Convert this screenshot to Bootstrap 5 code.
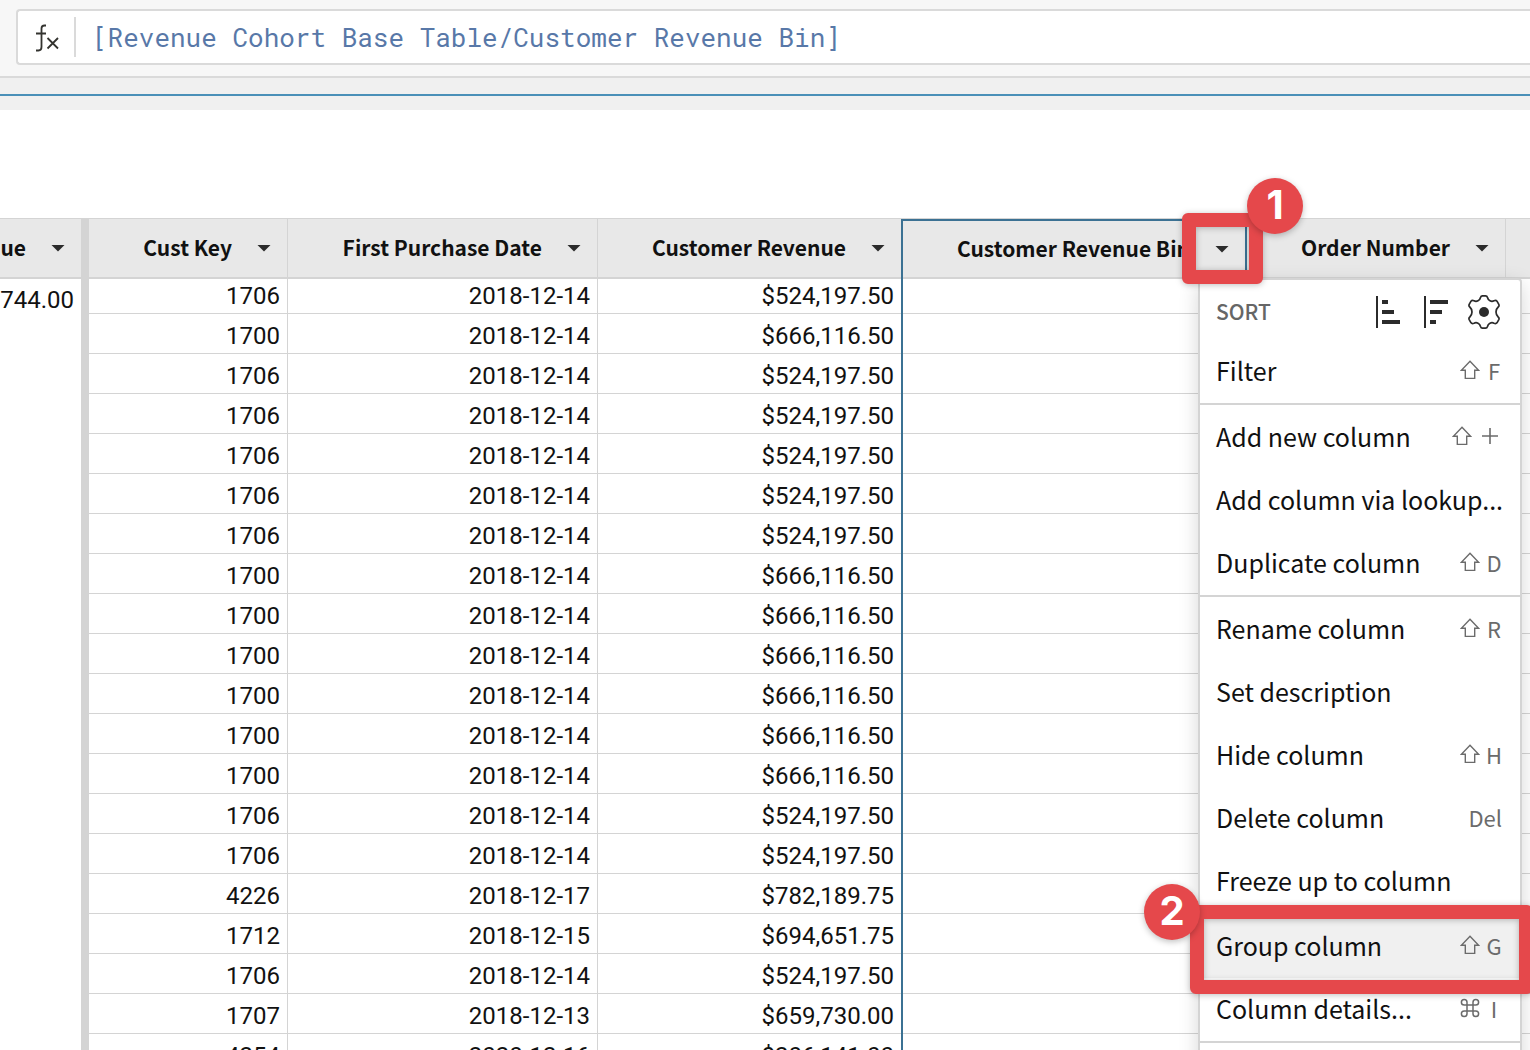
<!DOCTYPE html>
<html lang="en">
<head>
<meta charset="utf-8">
<meta name="viewport" content="width=device-width, initial-scale=1">
<title>Revenue Cohort Base Table</title>
<link href="https://cdn.jsdelivr.net/npm/bootstrap@5.3.0/dist/css/bootstrap.min.css" rel="stylesheet">
<style>
  :root { --line: #d4d4d4; --accent: #3b7193; --callout: #e5484b; }
  body { font-family: "Noto Sans CJK SC", "Noto Sans", sans-serif; color: #111; }

  /* formula bar */
  .formula-area { background: #f7f7f7; border-bottom: 2px solid #dadada; padding: 9px 0 11px 16px; }
  .formula-box { background: #fff; border: 2px solid #dadada; border-right: 0; border-radius: 4px 0 0 4px; height: 56px; padding-left: 16px; }
  .formula-icon { width: 42px; height: 40px; border-right: 2px solid #dadada; }
  .formula-input { font-family: "Roboto Mono", "Liberation Mono", monospace; font-size: 26px; color: #5878a8; padding: 0 16px; height: 48px; }
  .formula-input:focus { color: #5878a8; box-shadow: none; }
  .strip { background: #f0f0f0; height: 32px; padding-top: 16px; }
  .strip-line { height: 2px; background: #4a90b8; }

  /* data grid */
  .grid-wrap { margin-top: 108px; border-top: 1px solid var(--line); }
  .grid { table-layout: fixed; border-collapse: separate; border-spacing: 0; width: 100%; }
  .grid th { height: 60px; padding: 0 16px 0 0; background: #e8e8e8; border-right: 1px solid var(--line); border-bottom: 2px solid var(--line); font-size: 21px; line-height: 32px; font-weight: 700; position: relative; white-space: nowrap; }
  .head-text { padding-bottom: 2px; }
  .grid td { height: 40px; padding: 4px 7px 0 0; border-right: 1px solid var(--line); border-bottom: 1px solid var(--line); font-family: Roboto, sans-serif; font-size: 24px; line-height: 32px; text-align: right; vertical-align: middle; }
  .grid tbody tr:first-child td { height: 35px; padding-top: 0; }
  .grid .frozen { border-right: 8px solid var(--line); }
  .grid tbody tr:first-child td.frozen { vertical-align: top; padding-top: 5px; border-bottom: 0; }
  .grid .before-active { border-right: 0; }
  .grid .active-col { border-left: 2px solid var(--accent); border-right: 2px solid var(--accent); position: relative; }
  .grid .active-col::before { content: ""; position: absolute; top: 0; bottom: -2px; left: -2px; width: 2px; background: var(--accent); }
  .grid th.active-col { border-top: 2px solid var(--accent); height: 60px; }
  .grid th.active-col .head-text { padding-bottom: 3px; }
  .grid .edge { border-right: 0; }
  .caret { width: 14px; height: 7px; border: 0; padding: 0; background: #2b2b2b; clip-path: polygon(0 0, 100% 0, 50% 100%); margin-left: 25px; flex: none; }

  /* column menu */
  .col-menu { display: block; position: absolute; top: 57px; right: -277px; width: 324px; padding: 0; border: 2px solid var(--line); border-radius: 4px; box-shadow: 0 6px 20px rgba(0,0,0,.16); font-weight: 400; z-index: 5; background: #fff; }
  .sort-row { height: 60px; padding: 4px 18px 0 16px; }
  .sort-label { font-size: 21px; font-weight: 500; color: #666; padding-bottom: 2px; }
  .icon-btn { border: 0; background: none; padding: 0; line-height: 0; }
  .menu-row { height: 63px; padding: 0 18px 4px 16px; font-size: 25px; line-height: 36px; color: #111; position: relative; }
  .menu-row.current { height: 65px; padding-bottom: 2px; background: #f0f0f0; }
  .keys { font-size: 22px; color: #6b6b6b; gap: 6px; }
  .key { width: 16px; text-align: center; display: inline-flex; justify-content: center; }
  .key-wide { width: 24px; }
  .rule { height: 2px; background: var(--line); }
  .sec-pad { padding-top: 1px; }

  /* tutorial callouts */
  .ring { position: absolute; border: 14px solid var(--callout); border-radius: 6px; pointer-events: none; filter: drop-shadow(0 1px 3px rgba(0,0,0,.25)); z-index: 8; }
  .ring-one { top: -8px; right: -18px; width: 81px; height: 71px; }
  .ring-two { top: -8px; left: -10px; right: -13px; height: 89px; }
  .dot { position: absolute; width: 56px; height: 56px; border-radius: 50%; background: var(--callout); color: #fff; font: 700 40px/54px Inter, sans-serif; text-align: center; box-shadow: 0 2px 6px rgba(0,0,0,.25); z-index: 9; }
  .dot-one { top: -43px; right: -58px; }
  .dot-two { top: -29px; left: -56px; }
</style>
<script src="https://cdn.jsdelivr.net/npm/bootstrap@5.3.0/dist/js/bootstrap.bundle.min.js"></script>
</head>
<body class="vh-100 overflow-hidden bg-white">
<svg class="d-none" xmlns="http://www.w3.org/2000/svg">
  <symbol id="shift" viewBox="0 0 20 20"><path d="M10 1.2 18.6 10.2H14.7V18.4H5.3V10.2H1.4Z" fill="none" stroke="#6b6b6b" stroke-width="1.4"/></symbol>
  <symbol id="cmd" viewBox="0 0 20 20"><path d="M7 7H13V13H7ZM7 7H4.2A2.8 2.8 0 1 1 7 4.2ZM13 7V4.2A2.8 2.8 0 1 1 15.800 7ZM13 13H15.800A2.8 2.8 0 1 1 13 15.800ZM7 13V15.800A2.8 2.8 0 1 1 4.200 13Z" fill="none" stroke="#6b6b6b" stroke-width="1.5"/></symbol>
</svg>

<header>
  <div class="formula-area">
    <div class="formula-box d-flex align-items-center">
      <label class="formula-icon flex-shrink-0 d-flex align-items-center" for="formula" aria-label="Formula">
        <svg width="26" height="30" viewBox="0 0 26 30" fill="none" stroke="#33332f" stroke-width="1.8"><path d="M12 3.500H10.500Q7.500 3.500 7.500 6.500V25Q7.500 28.500 4.500 28.500H2M2 11.500H12M13.500 16 24 26.500M24 16 13.500 26.500"/></svg>
      </label>
      <input id="formula" class="formula-input form-control border-0 rounded-0" type="text" spellcheck="false" value="[Revenue Cohort Base Table/Customer Revenue Bin]">
    </div>
  </div>
  <div class="strip"><div class="strip-line"></div></div>
</header>

<main class="grid-wrap">
  <table class="grid">
    <colgroup><col style="width:89px"><col style="width:199px"><col style="width:310px"><col style="width:303px"><col style="width:346px"><col style="width:259px"><col></colgroup>
    <thead>
      <tr>
        <th class="frozen" scope="col"><div class="d-flex align-items-center justify-content-end"><span class="head-text">ue</span><button class="caret" aria-label="Column menu"></button></div></th>
        <th scope="col"><div class="d-flex align-items-center justify-content-end"><span class="head-text">Cust Key</span><button class="caret" aria-label="Column menu"></button></div></th>
        <th scope="col"><div class="d-flex align-items-center justify-content-end"><span class="head-text">First Purchase Date</span><button class="caret" aria-label="Column menu"></button></div></th>
        <th class="before-active" scope="col"><div class="d-flex align-items-center justify-content-end"><span class="head-text">Customer Revenue</span><button class="caret" aria-label="Column menu"></button></div></th>
        <th class="active-col" scope="col">
          <div class="d-flex align-items-center justify-content-end"><span class="head-text">Customer Revenue Bin</span><button class="caret" aria-label="Column menu" aria-expanded="true"></button></div>
          <div class="col-menu dropdown-menu">
            <div class="sort-row d-flex align-items-center">
              <span class="sort-label me-auto">SORT</span>
              <button class="icon-btn me-4" aria-label="Sort ascending"><svg width="24" height="32" fill="#2b2b2b"><path d="M0 0h2v32H0zM6 4h6v4H6zM6 14h12v4H6zM6 24h18v4H6z"/></svg></button>
              <button class="icon-btn" aria-label="Sort descending"><svg width="24" height="32" fill="#2b2b2b"><path d="M0 0h2v32H0zM6 4h18v4H6zM6 14h12v4H6zM6 24h6v4H6z"/></svg></button>
              <button class="icon-btn ms-3" aria-label="Sort settings"><svg class="ms-1" width="34" height="36" viewBox="-16 -18 34 36"><path d="M-3.500-14.500Q-3-16.200-1.500-16.200H1.500Q3-16.200 3.500-14.500Q4-12.200 6-11.200Q8-10.200 10-11.200Q12-12 13-10.800L14.800-7.600Q15.500-6 14.200-5Q12-3 12 0Q12 3 14.200 5Q15.500 6 14.800 7.600L13 10.800Q12 12 10 11.200Q8 10.200 6 11.200Q4 12.200 3.500 14.500Q3 16.200 1.500 16.200H-1.500Q-3 16.200-3.500 14.500Q-4 12.200-6 11.200Q-8 10.200-10 11.200Q-12 12-13 10.800L-14.800 7.600Q-15.500 6-14.200 5Q-12 3-12 0Q-12-3-14.200-5Q-15.500-6-14.800-7.600L-13-10.800Q-12-12-10-11.200Q-8-10.200-6-11.200Q-4-12.200-3.500-14.500Z" fill="none" stroke="#2b2b2b" stroke-width="1.7"/><circle r="5" fill="#2b2b2b"/></svg></button>
            </div>
            <button class="menu-row dropdown-item d-flex align-items-center justify-content-between">Filter<span class="keys d-flex align-items-center"><svg width="20" height="20"><use href="#shift"/></svg><span class="key">F</span></span></button>
            <div class="rule"></div>
            <div class="sec-pad">
              <button class="menu-row dropdown-item d-flex align-items-center justify-content-between">Add new column<span class="keys d-flex align-items-center"><svg width="20" height="20"><use href="#shift"/></svg><span class="key key-wide"><svg width="16" height="16" stroke="#6b6b6b" stroke-width="1.6" role="img" aria-label="plus"><path d="M8 0V16M0 8H16"/></svg></span></span></button>
              <button class="menu-row dropdown-item d-flex align-items-center justify-content-between">Add column via lookup...</button>
              <button class="menu-row dropdown-item d-flex align-items-center justify-content-between">Duplicate column<span class="keys d-flex align-items-center"><svg width="20" height="20"><use href="#shift"/></svg><span class="key">D</span></span></button>
            </div>
            <div class="rule"></div>
            <div class="sec-pad">
              <button class="menu-row dropdown-item d-flex align-items-center justify-content-between">Rename column<span class="keys d-flex align-items-center"><svg width="20" height="20"><use href="#shift"/></svg><span class="key">R</span></span></button>
              <button class="menu-row dropdown-item d-flex align-items-center justify-content-between">Set description</button>
              <button class="menu-row dropdown-item d-flex align-items-center justify-content-between">Hide column<span class="keys d-flex align-items-center"><svg width="20" height="20"><use href="#shift"/></svg><span class="key">H</span></span></button>
              <button class="menu-row dropdown-item d-flex align-items-center justify-content-between">Delete column<span class="keys">Del</span></button>
              <button class="menu-row dropdown-item d-flex align-items-center justify-content-between">Freeze up to column</button>
              <button class="menu-row current dropdown-item d-flex align-items-center justify-content-between">Group column<span class="keys d-flex align-items-center"><svg width="20" height="20"><use href="#shift"/></svg><span class="key">G</span></span><span class="ring ring-two"></span><span class="dot dot-two">2</span></button>
              <button class="menu-row dropdown-item d-flex align-items-center justify-content-between">Column details...<span class="keys d-flex align-items-center"><svg width="20" height="20"><use href="#cmd"/></svg><span class="key">I</span></span></button>
            </div>
            <div class="rule"></div>
            <div class="menu-row"></div>
          </div>
          <span class="ring ring-one"></span><span class="dot dot-one">1</span>
        </th>
        <th scope="col"><div class="d-flex align-items-center justify-content-end"><span class="head-text">Order Number</span><button class="caret" aria-label="Column menu"></button></div></th>
        <th class="edge"></th>
      </tr>
    </thead>
    <tbody>
      <tr><td class="frozen" rowspan="20">744.00</td><td>1706</td><td>2018-12-14</td><td class="before-active">$524,197.50</td><td class="active-col"></td><td></td><td class="edge"></td></tr>
      <tr><td>1700</td><td>2018-12-14</td><td class="before-active">$666,116.50</td><td class="active-col"></td><td></td><td class="edge"></td></tr>
      <tr><td>1706</td><td>2018-12-14</td><td class="before-active">$524,197.50</td><td class="active-col"></td><td></td><td class="edge"></td></tr>
      <tr><td>1706</td><td>2018-12-14</td><td class="before-active">$524,197.50</td><td class="active-col"></td><td></td><td class="edge"></td></tr>
      <tr><td>1706</td><td>2018-12-14</td><td class="before-active">$524,197.50</td><td class="active-col"></td><td></td><td class="edge"></td></tr>
      <tr><td>1706</td><td>2018-12-14</td><td class="before-active">$524,197.50</td><td class="active-col"></td><td></td><td class="edge"></td></tr>
      <tr><td>1706</td><td>2018-12-14</td><td class="before-active">$524,197.50</td><td class="active-col"></td><td></td><td class="edge"></td></tr>
      <tr><td>1700</td><td>2018-12-14</td><td class="before-active">$666,116.50</td><td class="active-col"></td><td></td><td class="edge"></td></tr>
      <tr><td>1700</td><td>2018-12-14</td><td class="before-active">$666,116.50</td><td class="active-col"></td><td></td><td class="edge"></td></tr>
      <tr><td>1700</td><td>2018-12-14</td><td class="before-active">$666,116.50</td><td class="active-col"></td><td></td><td class="edge"></td></tr>
      <tr><td>1700</td><td>2018-12-14</td><td class="before-active">$666,116.50</td><td class="active-col"></td><td></td><td class="edge"></td></tr>
      <tr><td>1700</td><td>2018-12-14</td><td class="before-active">$666,116.50</td><td class="active-col"></td><td></td><td class="edge"></td></tr>
      <tr><td>1700</td><td>2018-12-14</td><td class="before-active">$666,116.50</td><td class="active-col"></td><td></td><td class="edge"></td></tr>
      <tr><td>1706</td><td>2018-12-14</td><td class="before-active">$524,197.50</td><td class="active-col"></td><td></td><td class="edge"></td></tr>
      <tr><td>1706</td><td>2018-12-14</td><td class="before-active">$524,197.50</td><td class="active-col"></td><td></td><td class="edge"></td></tr>
      <tr><td>4226</td><td>2018-12-17</td><td class="before-active">$782,189.75</td><td class="active-col"></td><td></td><td class="edge"></td></tr>
      <tr><td>1712</td><td>2018-12-15</td><td class="before-active">$694,651.75</td><td class="active-col"></td><td></td><td class="edge"></td></tr>
      <tr><td>1706</td><td>2018-12-14</td><td class="before-active">$524,197.50</td><td class="active-col"></td><td></td><td class="edge"></td></tr>
      <tr><td>1707</td><td>2018-12-13</td><td class="before-active">$659,730.00</td><td class="active-col"></td><td></td><td class="edge"></td></tr>
      <tr><td>4254</td><td>2020-12-16</td><td class="before-active">$206,141.00</td><td class="active-col"></td><td></td><td class="edge"></td></tr>
    </tbody>
  </table>
</main>
</body>
</html>
